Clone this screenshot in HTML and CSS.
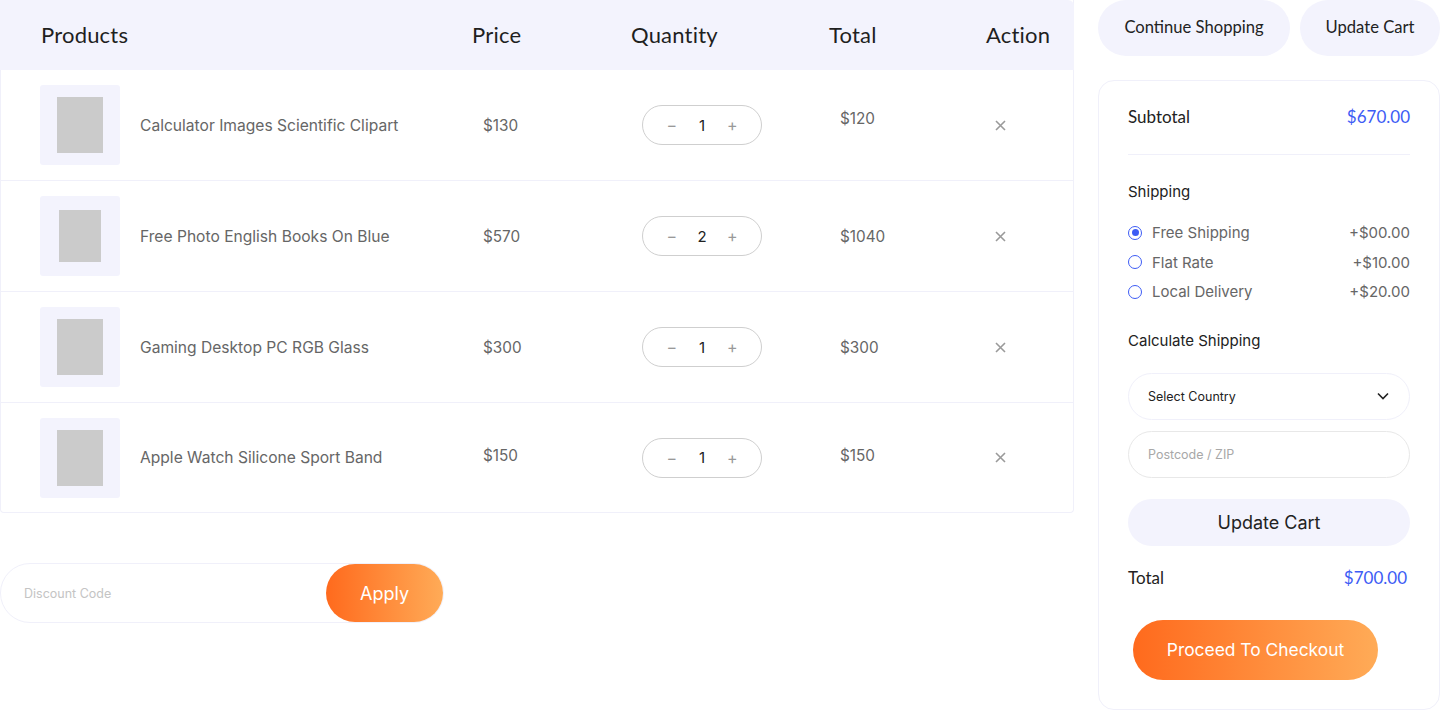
FILE: index.html
```html
<!DOCTYPE html>
<html>
<head>
<meta charset="utf-8">
<link rel="stylesheet" href="styles.css">
</head>
<body>
<div class="page">
  <div class="left">
    <div class="cart-table">
      <div class="thead">
        <div>Products</div>
        <div>Price</div>
        <div>Quantity</div>
        <div>Total</div>
        <div>Action</div>
      </div>
      <div class="trow">
        <div class="prod"><div class="thumb"><div class="ph"></div></div><span>Calculator Images Scientific Clipart</span></div>
        <div class="price">$130</div>
        <div><div class="qty"><span class="op">&minus;</span><span class="num">1</span><span class="op">+</span></div></div>
        <div class="price up">$120</div>
        <div><svg class="x" width="11" height="11" viewBox="0 0 11 11"><path d="M1 1L10 10M10 1L1 10" stroke="#9a9a9a" stroke-width="1.6"/></svg></div>
      </div>
      <div class="trow">
        <div class="prod"><div class="thumb"><div class="ph narrow"></div></div><span>Free Photo English Books On Blue</span></div>
        <div class="price">$570</div>
        <div><div class="qty"><span class="op">&minus;</span><span class="num">2</span><span class="op">+</span></div></div>
        <div class="price">$1040</div>
        <div><svg class="x" width="11" height="11" viewBox="0 0 11 11"><path d="M1 1L10 10M10 1L1 10" stroke="#9a9a9a" stroke-width="1.6"/></svg></div>
      </div>
      <div class="trow">
        <div class="prod"><div class="thumb"><div class="ph"></div></div><span>Gaming Desktop PC RGB Glass</span></div>
        <div class="price">$300</div>
        <div><div class="qty"><span class="op">&minus;</span><span class="num">1</span><span class="op">+</span></div></div>
        <div class="price">$300</div>
        <div><svg class="x" width="11" height="11" viewBox="0 0 11 11"><path d="M1 1L10 10M10 1L1 10" stroke="#9a9a9a" stroke-width="1.6"/></svg></div>
      </div>
      <div class="trow">
        <div class="prod"><div class="thumb"><div class="ph"></div></div><span>Apple Watch Silicone Sport Band</span></div>
        <div class="price up2">$150</div>
        <div><div class="qty"><span class="op">&minus;</span><span class="num">1</span><span class="op">+</span></div></div>
        <div class="price up2">$150</div>
        <div><svg class="x" width="11" height="11" viewBox="0 0 11 11"><path d="M1 1L10 10M10 1L1 10" stroke="#9a9a9a" stroke-width="1.6"/></svg></div>
      </div>
    </div>
    <div class="discount">
      <span class="placeholder">Discount Code</span>
      <button class="apply">Apply</button>
    </div>
  </div>
  <div class="right">
    <div class="top-btns">
      <button class="soft-btn cont">Continue Shopping</button>
      <button class="soft-btn upd">Update Cart</button>
    </div>
    <div class="summary">
      <div class="line sub">
        <span class="lbl">Subtotal</span>
        <span class="amt">$670.00</span>
      </div>
      <div class="divider"></div>
      <div class="sec-title">Shipping</div>
      <div class="options">
        <div class="opt"><span class="radio checked"></span><span class="opt-name">Free Shipping</span><span class="opt-price">+$00.00</span></div>
        <div class="opt"><span class="radio"></span><span class="opt-name">Flat Rate</span><span class="opt-price">+$10.00</span></div>
        <div class="opt"><span class="radio"></span><span class="opt-name">Local Delivery</span><span class="opt-price">+$20.00</span></div>
      </div>
      <div class="sec-title calc">Calculate Shipping</div>
      <div class="field select">
        <span>Select Country</span>
        <svg width="12" height="8" viewBox="0 0 12 8"><path d="M1 1.5L6 6.5L11 1.5" fill="none" stroke="#222" stroke-width="1.6"/></svg>
      </div>
      <div class="field zip"><span>Postcode / ZIP</span></div>
      <button class="upd-wide">Update Cart</button>
      <div class="line tot">
        <span class="lbl">Total</span>
        <span class="amt">$700.00</span>
      </div>
      <button class="checkout">Proceed To Checkout</button>
    </div>
  </div>
</div>
</body>
</html>
```
FILE: styles.css
```css
* { box-sizing: border-box; }
html, body { margin: 0; padding: 0; background: #fff; }
body { font-family: "Inter", "DejaVu Sans", sans-serif; color: #666; width: 1440px; height: 710px; overflow: hidden; }
button { font: inherit; border: none; cursor: pointer; }

.page { display: flex; gap: 24px; align-items: flex-start; }
.left { width: 1074px; }
.right { width: 342px; }

.cart-table { border: 1px solid #f0f0fa; border-top: none; border-radius: 0 0 4px 4px; }
.thead {
  display: grid;
  grid-template-columns: 431px 159px 198px 157px 1fr;
  padding-left: 41px;
  padding-bottom: 2px;
  height: 70px;
  align-items: center;
  background: #f3f3fd;
  margin: 0 -1px;
  border-radius: 0 6px 0 0;
  font-family: "Lato", "Noto Sans", sans-serif;
  font-size: 22px;
  letter-spacing: 0.2px;
  color: #1f1f1f;
}
.trow {
  display: grid;
  grid-template-columns: 443px 159px 198px 155px 1fr;
  padding-left: 39px;
  height: 111px;
  align-items: center;
  border-top: 1px solid #f0f0fa;
  font-size: 15.6px;
}
.thead + .trow { border-top: none; height: 110px; }
.trow:last-child { height: 110px; }
.prod { display: flex; align-items: center; gap: 20px; color: #666; }
.thumb { width: 80px; height: 80px; background: #f3f3fd; border-radius: 3px; display: flex; align-items: center; justify-content: center; }
.ph { width: 46px; height: 56px; background: #cbcbcb; }
.ph.narrow { width: 42px; height: 52px; }
.price { color: #666; font-size: 15.3px; }
.price.up { position: relative; top: -7px; }
.price.up2 { position: relative; top: -2px; }
.qty {
  width: 120px; height: 40px;
  border: 1px solid #cfcfcf; border-radius: 20px;
  display: flex; align-items: center; justify-content: center; gap: 20px;
  color: #999; font-size: 16px;
}
.qty .num { color: #222; font-size: 15px; width: 10px; text-align: center; }
.x { display: block; }

.discount {
  margin-top: 50px;
  width: 444px; height: 60px;
  border: 1px solid #f0f0fa; border-radius: 30px;
  display: flex; align-items: center; justify-content: space-between;
}
.placeholder { padding-left: 23px; font-size: 12.5px; color: #c4c4c4; }
.apply {
  width: 117px; height: 58px; border-radius: 29px;
  background: linear-gradient(90deg, #ff6a1d, #ffab57);
  color: #fff; font-size: 18px;
}

.top-btns { display: flex; gap: 10px; }
.soft-btn {
  height: 56px; border-radius: 28px; background: #f3f3fd;
  font-family: "Lato", "Noto Sans", sans-serif; font-size: 16.6px; color: #222;
  padding: 0 0 3px 0;
}
.cont { width: 192px; }
.upd { width: 140px; }

.summary {
  margin-top: 24px;
  height: 630px;
  border: 1px solid #f0f0fa; border-radius: 16px;
  padding: 22px 29px 0 29px;
}
.line { display: flex; justify-content: space-between; align-items: center; }
.lbl { font-family: "Lato", "Noto Sans", sans-serif; font-size: 17px; color: #222; }
.amt { font-family: "Lato", "Noto Sans", sans-serif; font-size: 17px; color: #3d5cf5; }
.sub { height: 26px; }
.divider { height: 1px; background: #f0f0fa; margin-top: 25px; }
.sec-title { font-size: 15px; color: #222; margin-top: 27px; line-height: 20px; }
.options { margin-top: 21px; display: flex; flex-direction: column; gap: 10px; }
.opt { display: flex; align-items: center; height: 19.5px; font-size: 15px; color: #666; }
.radio { width: 14px; height: 14px; border: 1.5px solid #3d5cf5; border-radius: 50%; margin-right: 10px; display: flex; align-items: center; justify-content: center; }
.radio.checked::after { content: ""; width: 7px; height: 7px; border-radius: 50%; background: #3d5cf5; }
.opt-name { flex: 1; }
.opt-price { color: #666; }
.sec-title.calc { margin-top: 29px; }
.field {
  height: 47px; border-radius: 24px; border: 1px solid #f0f0fa;
  display: flex; align-items: center; justify-content: space-between;
  padding: 0 20px 0 19px; font-size: 12.5px;
}
.select { margin-top: 22px; color: #222; }
.zip { margin-top: 11px; border-color: #e8e8e8; color: #a8a8a8; }
.upd-wide {
  margin-top: 21px; width: 100%; height: 47px; border-radius: 24px;
  background: #f3f3fd; color: #222; font-size: 18px;
}
.tot { margin-top: 20px; height: 24px; padding-right: 3px; }
.checkout {
  margin-top: 30px; margin-left: 5px;
  width: 245px; height: 60px; border-radius: 30px;
  background: linear-gradient(90deg, #ff6a1d, #ffab57);
  color: #fff; font-size: 17.4px;
}
```
